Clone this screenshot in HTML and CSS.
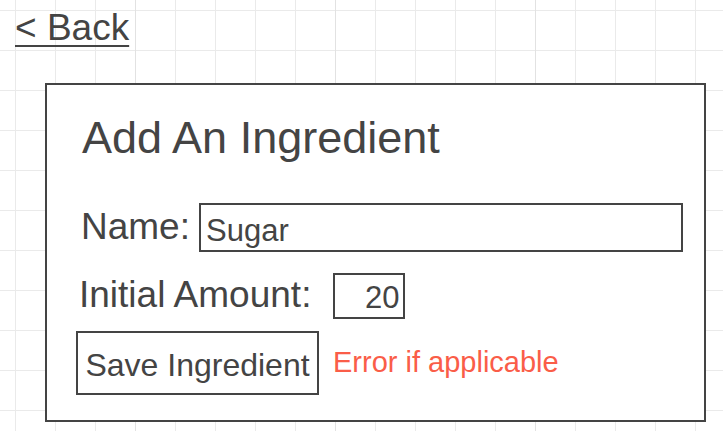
FILE: index.html
```html
<!DOCTYPE html>
<html lang="en">
<head>
<meta charset="utf-8">
<title>Add An Ingredient</title>
<link rel="stylesheet" href="styles.css">
</head>
<body>
<div class="page">
  <header class="top">
    <a class="back" href="#">&lt; Back</a>
  </header>
  <section class="card">
    <h1 class="title">Add An Ingredient</h1>
    <div class="row row-name">
      <label class="label label-name" for="name">Name:</label>
      <input class="field field-name" id="name" type="text" value="Sugar">
    </div>
    <div class="row row-amount">
      <label class="label label-amount" for="amount">Initial Amount:</label>
      <input class="field field-amount" id="amount" type="text" value="20">
    </div>
    <div class="row row-actions">
      <button class="save" type="button">Save Ingredient</button>
      <span class="error">Error if applicable</span>
    </div>
  </section>
</div>
</body>
</html>
```
FILE: styles.css
```css
html, body {
  margin: 0;
  padding: 0;
}
body {
  width: 723px;
  height: 431px;
  overflow: hidden;
  background-color: #ffffff;
  background-image:
    linear-gradient(to right, #e2e2e2 1px, transparent 1px),
    linear-gradient(to right, #eaeaea 1px, transparent 1px),
    linear-gradient(to bottom, #eaeaea 1px, transparent 1px);
  background-size: 200px 100%, 40px 100%, 100% 40px;
  background-position: 135px 0, 15px 0, 0 10px;
  font-family: "Liberation Sans", Arial, sans-serif;
  color: #444444;
}
.page {
  display: flex;
  flex-direction: column;
}
.top {
  height: 83px;
  box-sizing: border-box;
  padding: 7px 0 0 15px;
}
.back {
  font-size: 37px;
  color: #444444;
  text-decoration: underline;
  text-decoration-thickness: 2px;
  text-underline-offset: 5px;
}
.card {
  margin-left: 45px;
  width: 661px;
  height: 339px;
  box-sizing: border-box;
  border: 2px solid #444444;
  background: #ffffff;
  padding: 30px 0 0 0;
  display: flex;
  flex-direction: column;
}
.title {
  margin: 0 0 0 35px;
  font-size: 45px;
  line-height: 45px;
  font-weight: normal;
}
.row {
  display: flex;
  align-items: flex-start;
}
.row-name {
  margin-top: 43px;
  padding-left: 34px;
  gap: 9px;
}
.row-amount {
  margin-top: 21px;
  padding-left: 32px;
  gap: 22px;
}
.row-actions {
  margin-top: 12px;
  padding-left: 29px;
  gap: 14px;
}
.label {
  font-size: 37px;
  line-height: 37px;
  margin-top: 5px;
}
.label-amount {
  margin-top: 3px;
}
.field {
  box-sizing: border-box;
  border: 2px solid #444444;
  border-radius: 0;
  background: #ffffff;
  font-family: "Liberation Sans", Arial, sans-serif;
  font-size: 31px;
  color: #444444;
  margin: 0;
  outline: none;
}
.field-name {
  width: 484px;
  height: 49px;
  padding: 6px 5px 0 5px;
}
.field-amount {
  width: 72px;
  height: 46px;
  padding: 4px 4px 0 4px;
  text-align: right;
}
.save {
  box-sizing: border-box;
  width: 243px;
  height: 64px;
  border: 2px solid #444444;
  border-radius: 0;
  background: #ffffff;
  font-family: "Liberation Sans", Arial, sans-serif;
  font-size: 32px;
  color: #444444;
  padding: 4px 0 0 0;
  margin: 0;
}
.error {
  font-size: 29px;
  line-height: 29px;
  color: #fa5d48;
  margin-top: 17px;
}
```
